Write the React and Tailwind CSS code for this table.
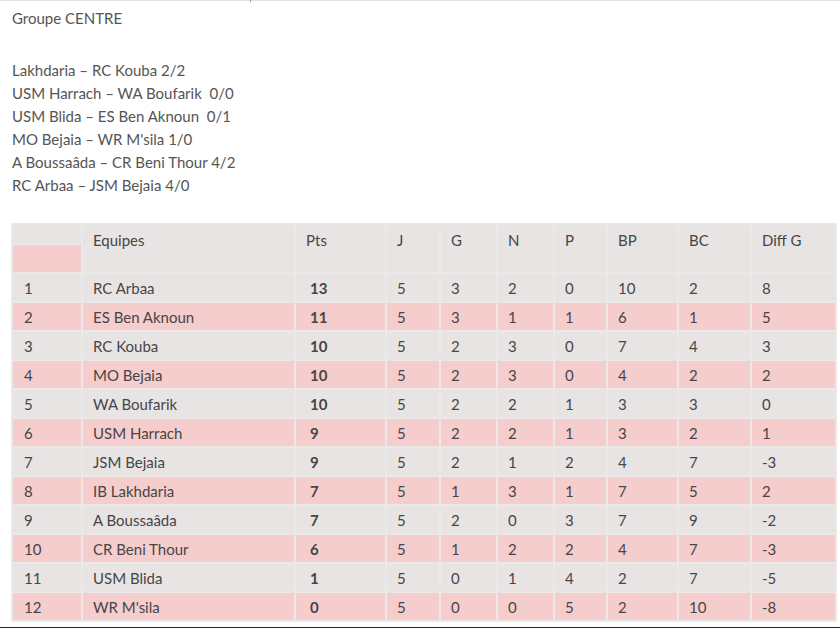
import React from "react";

const rows = [
  ["1", "RC Arbaa", "13", "5", "3", "2", "0", "10", "2", "8"],
  ["2", "ES Ben Aknoun", "11", "5", "3", "1", "1", "6", "1", "5"],
  ["3", "RC Kouba", "10", "5", "2", "3", "0", "7", "4", "3"],
  ["4", "MO Bejaia", "10", "5", "2", "3", "0", "4", "2", "2"],
  ["5", "WA Boufarik", "10", "5", "2", "2", "1", "3", "3", "0"],
  ["6", "USM Harrach", "9", "5", "2", "2", "1", "3", "2", "1"],
  ["7", "JSM Bejaia", "9", "5", "2", "1", "2", "4", "7", "-3"],
  ["8", "IB Lakhdaria", "7", "5", "1", "3", "1", "7", "5", "2"],
  ["9", "A Boussaâda", "7", "5", "2", "0", "3", "7", "9", "-2"],
  ["10", "CR Beni Thour", "6", "5", "1", "2", "2", "4", "7", "-3"],
  ["11", "USM Blida", "1", "5", "0", "1", "4", "2", "7", "-5"],
  ["12", "WR M'sila", "0", "5", "0", "0", "5", "2", "10", "-8"],
];

const matches = [
  "Lakhdaria – RC Kouba 2/2",
  "USM Harrach – WA Boufarik \u00a00/0",
  "USM Blida – ES Ben Aknoun \u00a00/1",
  "MO Bejaia – WR M'sila 1/0",
  "A Boussaâda – CR Beni Thour 4/2",
  "RC Arbaa – JSM Bejaia 4/0",
];

const headers = ["Equipes", "Pts", "J", "G", "N", "P", "BP", "BC", "Diff G"];
const widths = [68, 211, 89, 52, 55, 55, 51, 69, 71, 83];

export default function App() {
  return (
    <div className="min-h-[628px] bg-white font-['Lato',sans-serif]">
      <div className="relative h-px bg-[#e3e3e3]">
        <span className="absolute left-[250px] top-0 h-[2px] w-px bg-[#9a9a9a]" />
      </div>
      <div className="pl-3 text-[15px] leading-[23px] text-[#555]">
        <p className="mt-[6px]">Groupe CENTRE</p>
        <div className="mt-[29px]">
          {matches.map((m) => (
            <p key={m}>{m}</p>
          ))}
        </div>
      </div>
      <table className="ml-[11px] mt-[26px] w-[826px] table-fixed border-separate border-spacing-[2px] bg-[#ebe8e8] text-[15px] leading-[20px] text-[#464646]">
        <colgroup>
          {widths.map((w, i) => (
            <col key={i} style={{ width: w }} />
          ))}
        </colgroup>
        <thead>
          <tr className="h-[18px]">
            <th className="bg-[#e8e4e4] p-0" />
            {headers.map((h) => (
              <th
                key={h}
                rowSpan={2}
                className="bg-[#e8e4e4] px-[10px] pt-[5px] text-left align-top font-normal"
              >
                {h}
              </th>
            ))}
          </tr>
          <tr className="h-[27px]">
            <th className="bg-[#f6cdcd] p-0" />
          </tr>
        </thead>
        <tbody>
          {rows.map((r, i) => {
            const bg = i % 2 === 1 ? "bg-[#f6cdcd]" : "bg-[#e8e4e4]";
            return (
              <tr key={r[0]} className="h-[27px]">
                {r.map((c, j) => (
                  <td
                    key={j}
                    className={`${bg} py-0 align-middle ${
                      j === 2 ? "pl-[14px] font-bold" : j === 0 ? "pl-[11px]" : "pl-[10px]"
                    }`}
                  >
                    {c}
                  </td>
                ))}
              </tr>
            );
          })}
        </tbody>
      </table>
      <div className="mt-[5px] h-[10px] bg-[#23282d]" />
    </div>
  );
}
